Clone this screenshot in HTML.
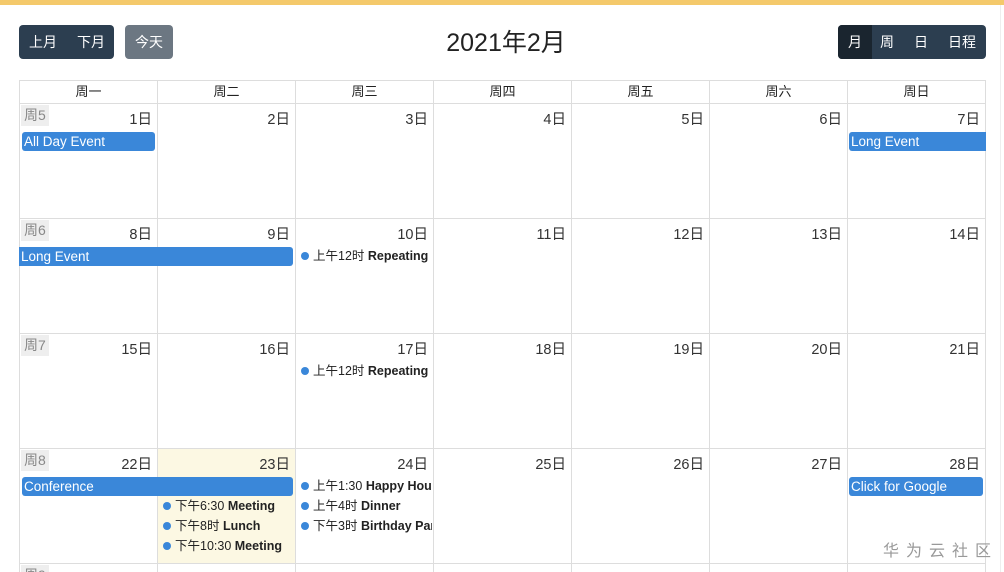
<!DOCTYPE html>
<html><head><meta charset="utf-8"><style>
*{margin:0;padding:0;box-sizing:border-box}
html,body{width:1004px;height:572px;overflow:hidden}
body{background:#fff;font-family:"Liberation Sans","Noto Sans CJK SC",sans-serif;position:relative;color:#222}
.top{position:absolute;left:0;top:0;width:1004px;height:5px;background:#f4c96b}
.edge{position:absolute;left:1000px;top:5px;width:1px;height:567px;background:#eee}
.btn{position:absolute;top:25px;height:34px;border-radius:4px;color:#fff;font-size:14px;line-height:34px}
table{position:absolute;left:19px;top:80px;border-collapse:collapse;table-layout:fixed;width:967px}
td,th{border:1px solid #ddd;width:138px;vertical-align:top;position:relative}
th{height:23px;font-weight:normal;font-size:13px;line-height:22px}
td{height:115px}
tr.last td{height:8px;border-bottom:none;overflow:hidden}
.n{position:absolute;right:5px;top:4px;font-size:14.5px;color:#333}
.w{position:absolute;left:1px;top:1px;background:#eee;color:#888;font-size:14px;padding:1px 3px;line-height:19px}
tr.last .w{height:7px;overflow:hidden;line-height:19px}
.ev{position:absolute;height:19px;background:#3a87d9;color:#fff;font-size:13.5px;line-height:19px;padding-left:2px;border-radius:3px;white-space:nowrap;overflow:hidden}
.d{position:absolute;font-size:12.5px;white-space:nowrap;overflow:hidden;line-height:18px}
.d:before{content:"";display:inline-block;width:8px;height:8px;border-radius:50%;background:#3a87d9;margin:0 4px 1px 2px;vertical-align:middle}
.d b{font-weight:bold;color:#222}
</style></head><body>
<div class="top"></div><div class="edge"></div>
<div class="btn" style="left:19px;width:95px;background:#2c3e50"><span style="position:absolute;left:10px">上月</span><span style="position:absolute;left:58px">下月</span></div>
<div class="btn" style="left:125px;width:48px;background:#6c7782;text-align:center">今天</div>
<div style="position:absolute;left:0;width:1012px;top:27px;text-align:center;font-size:25px;color:#222;line-height:32px">2021年2月</div>
<div class="btn" style="left:838px;width:148px;background:#2c3e50;overflow:hidden"><span style="position:absolute;left:0;width:34px;height:34px;background:#1a252f"></span><span style="position:absolute;left:10px">月</span><span style="position:absolute;left:42px">周</span><span style="position:absolute;left:76px">日</span><span style="position:absolute;left:110px">日程</span></div>
<table>
<tr><th>周一</th><th>周二</th><th>周三</th><th>周四</th><th>周五</th><th>周六</th><th>周日</th></tr>
<tr><td><span class="w">周5</span><span class="n">1日</span></td><td><span class="n">2日</span></td><td><span class="n">3日</span></td><td><span class="n">4日</span></td><td><span class="n">5日</span></td><td><span class="n">6日</span></td><td><span class="n">7日</span></td></tr>
<tr><td><span class="w">周6</span><span class="n">8日</span></td><td><span class="n">9日</span></td><td><span class="n">10日</span></td><td><span class="n">11日</span></td><td><span class="n">12日</span></td><td><span class="n">13日</span></td><td><span class="n">14日</span></td></tr>
<tr><td><span class="w">周7</span><span class="n">15日</span></td><td><span class="n">16日</span></td><td><span class="n">17日</span></td><td><span class="n">18日</span></td><td><span class="n">19日</span></td><td><span class="n">20日</span></td><td><span class="n">21日</span></td></tr>
<tr><td><span class="w">周8</span><span class="n">22日</span></td><td style="background:#fcf8e3"><span class="n">23日</span></td><td><span class="n">24日</span></td><td><span class="n">25日</span></td><td><span class="n">26日</span></td><td><span class="n">27日</span></td><td><span class="n">28日</span></td></tr>
<tr class="last"><td><span class="w">周9</span></td><td></td><td></td><td></td><td></td><td></td><td></td></tr>
</table>
<div class="ev" style="left:22px;top:132px;width:133px">All Day Event</div>
<div class="ev" style="left:849px;top:132px;width:137px;border-radius:3px 0 0 3px">Long Event</div>
<div class="ev" style="left:19px;top:247px;width:274px;border-radius:0 3px 3px 0">Long Event</div>
<div class="ev" style="left:22px;top:477px;width:271px">Conference</div>
<div class="ev" style="left:849px;top:477px;width:134px">Click for Google</div>
<div class="d" style="left:299px;top:247px;width:133px">上午12时 <b>Repeating</b></div>
<div class="d" style="left:299px;top:362px;width:133px">上午12时 <b>Repeating</b></div>
<div class="d" style="left:299px;top:477px;width:133px">上午1:30 <b>Happy Hour</b></div>
<div class="d" style="left:299px;top:497px;width:133px">上午4时 <b>Dinner</b></div>
<div class="d" style="left:299px;top:517px;width:133px">下午3时 <b>Birthday Party</b></div>
<div class="d" style="left:161px;top:497px;width:133px">下午6:30 <b>Meeting</b></div>
<div class="d" style="left:161px;top:517px;width:133px">下午8时 <b>Lunch</b></div>
<div class="d" style="left:161px;top:537px;width:133px">下午10:30 <b>Meeting</b></div>
<div style="position:absolute;left:883px;top:537px;font-size:16px;color:#999;letter-spacing:7px;font-family:'Noto Sans CJK SC',sans-serif">华为云社区</div>
</body></html>
